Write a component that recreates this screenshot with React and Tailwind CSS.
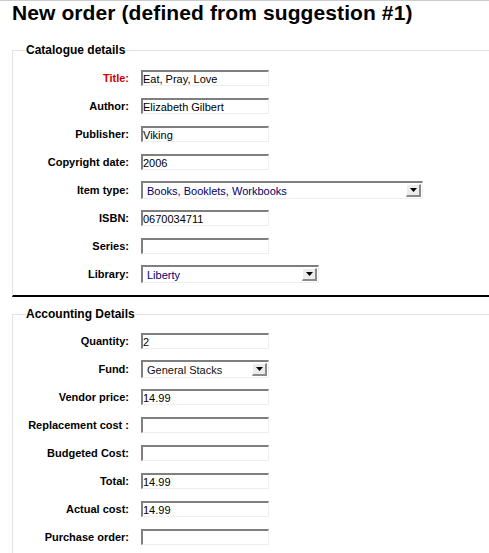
import React from 'react';

function Field({ label, red, children }) {
    return (
        <div className="flex items-center py-[6px]">
            <label className={`w-[103px] shrink-0 text-right text-[11px] font-bold leading-[14px] ${red ? 'text-[#cc0000]' : 'text-black'}`}>
                {label}
            </label>
            <div className="ml-3 flex">{children}</div>
        </div>
    );
}

function TextInput({ value = '' }) {
    return (
        <input
            readOnly
            defaultValue={value}
            className="h-[16px] w-[128px] border-t-2 border-l-2 border-r border-b border-t-[#7f7f7f] border-l-[#7f7f7f] border-r-[#eeeeee] border-b-[#eeeeee] bg-white px-0 text-[11px] leading-[12px] text-black outline-none"
        />
    );
}

function Dropdown({ value, className, textClass = 'text-[#000066]' }) {
    return (
        <div className={`-my-px flex h-[18px] items-center justify-between border-t-2 border-l-2 border-r border-b border-t-[#7f7f7f] border-l-[#7f7f7f] border-r-[#eeeeee] border-b-[#eeeeee] bg-white pl-1 pr-[1px] ${className}`}>
            <span className={`text-[11px] leading-[14px] ${textClass}`}>{value}</span>
            <span className="flex h-[13px] w-[15px] items-center justify-center border-t border-l border-r-2 border-b-2 border-t-white border-l-white border-r-[#8a8a8a] border-b-[#8a8a8a] bg-[#ececec]">
                <svg width="7" height="4" viewBox="0 0 7 4">
                    <path d="M0 0h7L3.5 4z" fill="#000" />
                </svg>
            </span>
        </div>
    );
}

export default function App() {
    return (
        <div className="min-h-[553px] border-t border-[#cccccc] bg-white font-['Liberation_Sans',Arial,sans-serif] text-black">
            <h1 className="ml-3 text-[21px] font-bold leading-[24px] tracking-[0.1px]">New order (defined from suggestion #1)</h1>

            <fieldset className="ml-3 mt-[18px] border-t border-l border-b-2 border-t-[#e2e2e2] border-l-[#e2e2e2] border-b-black pb-[7px] pl-[13px] pt-[7px]">
                <legend className="text-[12px] font-bold leading-[14px]">Catalogue details</legend>
                <Field label="Title:" red>
                    <TextInput value="Eat, Pray, Love" />
                </Field>
                <Field label="Author:">
                    <TextInput value="Elizabeth Gilbert" />
                </Field>
                <Field label="Publisher:">
                    <TextInput value="Viking" />
                </Field>
                <Field label="Copyright date:">
                    <TextInput value="2006" />
                </Field>
                <Field label="Item type:">
                    <Dropdown value="Books, Booklets, Workbooks" className="w-[282px]" />
                </Field>
                <Field label="ISBN:">
                    <TextInput value="0670034711" />
                </Field>
                <Field label="Series:">
                    <TextInput />
                </Field>
                <Field label="Library:">
                    <Dropdown value="Liberty" className="w-[178px]" />
                </Field>
            </fieldset>

            <fieldset className="ml-3 mt-[10px] border-t border-l border-t-[#e2e2e2] border-l-[#e2e2e2] pb-3 pl-[13px] pt-[6px]">
                <legend className="text-[12px] font-bold leading-[14px]">Accounting Details</legend>
                <Field label="Quantity:">
                    <TextInput value="2" />
                </Field>
                <Field label="Fund:">
                    <Dropdown value="General Stacks" className="w-[128px]" textClass="text-[#111111]" />
                </Field>
                <Field label="Vendor price:">
                    <TextInput value="14.99" />
                </Field>
                <Field label="Replacement cost :">
                    <TextInput />
                </Field>
                <Field label="Budgeted Cost:">
                    <TextInput />
                </Field>
                <Field label="Total:">
                    <TextInput value="14.99" />
                </Field>
                <Field label="Actual cost:">
                    <TextInput value="14.99" />
                </Field>
                <Field label="Purchase order:">
                    <TextInput />
                </Field>
            </fieldset>
        </div>
    );
}
